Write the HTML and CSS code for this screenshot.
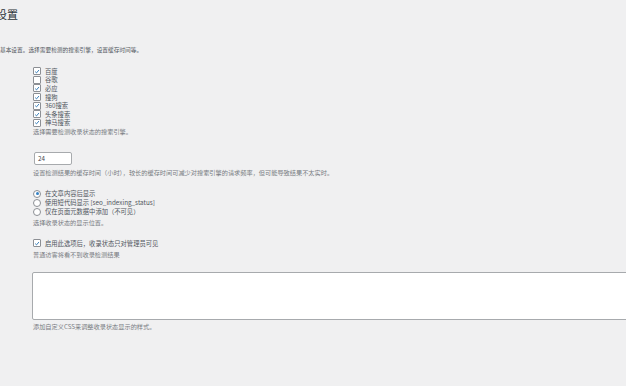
FILE: index.html
```html
<!DOCTYPE html>
<html lang="zh-CN">
<head>
    <meta charset="UTF-8">
    <meta name="viewport" content="width=device-width, initial-scale=1.0">
    <title>设置</title>
    <link rel="stylesheet" href="styles.css">
</head>
<body>
    <div class="wrap">
        <h1 class="title">设置</h1>
        <p class="intro">基本设置。选择需要检测的搜索引擎，设置缓存时间等。</p>

        <div class="fields">
            <div class="field engines">
                <label class="row"><span class="box checked"><svg viewBox="0 0 10 10"><path d="M2 5.2 L4.2 7.3 L8.2 2.6" /></svg></span>百度</label>
                <label class="row"><span class="box"></span>谷歌</label>
                <label class="row"><span class="box checked"><svg viewBox="0 0 10 10"><path d="M2 5.2 L4.2 7.3 L8.2 2.6" /></svg></span>必应</label>
                <label class="row"><span class="box checked"><svg viewBox="0 0 10 10"><path d="M2 5.2 L4.2 7.3 L8.2 2.6" /></svg></span>搜狗</label>
                <label class="row"><span class="box checked"><svg viewBox="0 0 10 10"><path d="M2 5.2 L4.2 7.3 L8.2 2.6" /></svg></span>360搜索</label>
                <label class="row"><span class="box checked"><svg viewBox="0 0 10 10"><path d="M2 5.2 L4.2 7.3 L8.2 2.6" /></svg></span>头条搜索</label>
                <label class="row"><span class="box checked"><svg viewBox="0 0 10 10"><path d="M2 5.2 L4.2 7.3 L8.2 2.6" /></svg></span>神马搜索</label>
                <p class="description">选择需要检测收录状态的搜索引擎。</p>
            </div>

            <div class="field cache">
                <div class="text-input">24</div>
                <p class="description">设置检测结果的缓存时间（小时），较长的缓存时间可减少对搜索引擎的请求频率，但可能导致结果不太实时。</p>
            </div>

            <div class="field position">
                <label class="row radio-row"><span class="radio checked"></span>在文章内容后显示</label>
                <label class="row radio-row"><span class="radio"></span>使用短代码显示 [seo_indexing_status]</label>
                <label class="row radio-row"><span class="radio"></span>仅在页面元数据中添加（不可见）</label>
                <p class="description">选择收录状态的显示位置。</p>
            </div>

            <div class="field admin-only">
                <label class="row"><span class="box checked"><svg viewBox="0 0 10 10"><path d="M2 5.2 L4.2 7.3 L8.2 2.6" /></svg></span>启用此选项后，收录状态只对管理员可见</label>
                <p class="description">普通访客将看不到收录检测结果</p>
            </div>

            <div class="field custom-css">
                <div class="textarea"></div>
                <p class="description">添加自定义CSS来调整收录状态显示的样式。</p>
            </div>
        </div>
    </div>
</body>
</html>
```

FILE: styles.css
```css
html, body {
    overflow: hidden;
}

body {
    font-family: 'Noto Sans CJK SC', 'Liberation Sans', sans-serif;
    background-color: #f0f0f1;
    color: #50575e;
    margin: 0;
    padding: 0;
    height: 100vh;
}

.wrap {
    padding-top: 7px;
}

.title {
    margin: 0 0 0 -4px;
    font-size: 11px;
    line-height: 14px;
    font-weight: 400;
    color: #2c3338;
}

.intro {
    margin: 25px 0 0 0;
    font-size: 5.7px;
    line-height: 8px;
    color: #50575e;
}

.fields {
    padding-left: 33px;
}

.field {
    display: flex;
    flex-direction: column;
    align-items: flex-start;
}

.engines {
    margin-top: 13px;
}

.cache {
    margin-top: 16px;
}

.position {
    margin-top: 12.5px;
}

.admin-only {
    margin-top: 12.5px;
}

.custom-css {
    margin-top: 13px;
}

.row {
    display: flex;
    align-items: center;
    height: 8.6px;
    font-size: 6.3px;
    color: #50575e;
}

.radio-row {
    height: 9px;
}

.box {
    width: 6px;
    height: 6px;
    border: 1px solid #8c8f94;
    border-radius: 1px;
    background-color: #ffffff;
    margin-right: 4px;
    display: flex;
    align-items: center;
    justify-content: center;
}

.box svg {
    width: 7px;
    height: 7px;
    fill: none;
    stroke: #2271b1;
    stroke-width: 1.5;
}

.radio {
    width: 6px;
    height: 6px;
    border: 1px solid #8c8f94;
    border-radius: 50%;
    background-color: #ffffff;
    margin-right: 4px;
    display: flex;
    align-items: center;
    justify-content: center;
}

.radio.checked::before {
    content: "";
    width: 3px;
    height: 3px;
    border-radius: 50%;
    background-color: #3582c4;
}

.description {
    margin: 0;
    font-size: 6.2px;
    line-height: 8px;
    color: #787c82;
}

.engines .description {
    margin-top: 0.5px;
}

.position .description {
    margin-top: 2.5px;
}

.admin-only .description {
    margin-top: 3.5px;
}

.text-input {
    width: 33px;
    height: 11px;
    border: 1px solid #a7aaad;
    border-radius: 2px;
    background-color: #ffffff;
    padding-left: 3px;
    font-size: 6.2px;
    line-height: 11px;
    color: #3c434a;
    margin-left: 1px;
}

.cache .description {
    margin-top: 4px;
}

.textarea {
    width: 620px;
    height: 46px;
    border: 1px solid #a7aaad;
    border-radius: 2px;
    background-color: #ffffff;
    margin-left: -1px;
}

.custom-css .description {
    margin-top: 3px;
}
```
